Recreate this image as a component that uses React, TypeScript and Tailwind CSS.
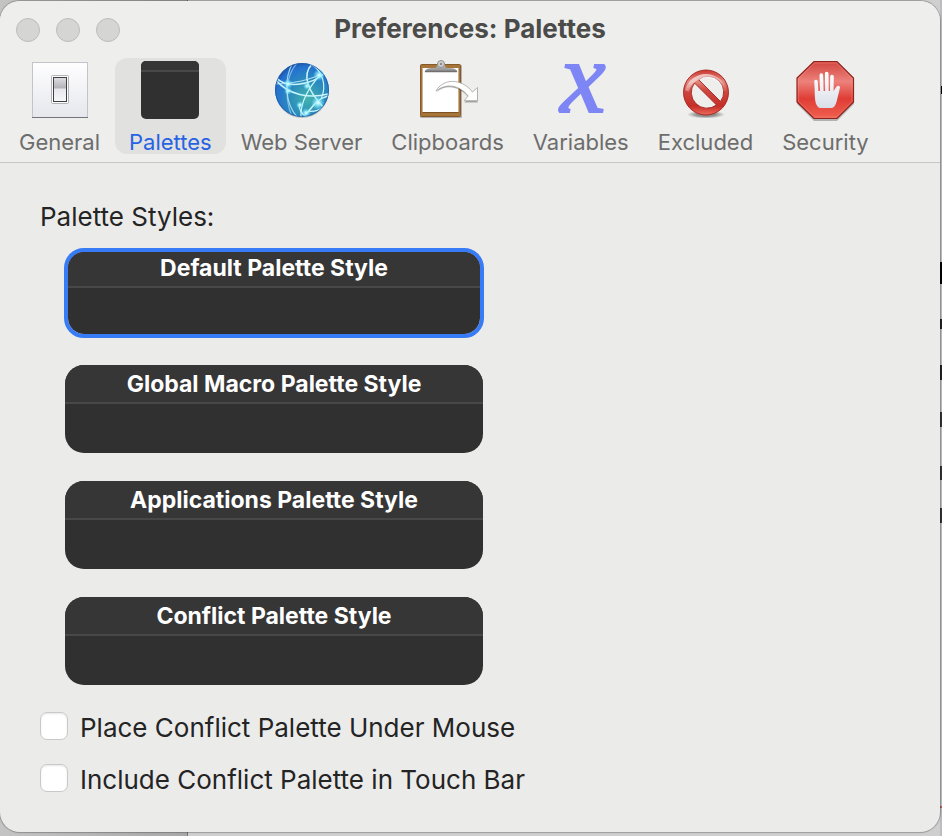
import { useState } from "react";
import type { ReactNode } from "react";

function GeneralIcon() {
  return (
    <svg width="60" height="60" viewBox="0 0 60 60" aria-hidden="true">
      <defs>
        <linearGradient id="plate" x1="0" y1="0" x2="0" y2="1">
          <stop offset="0" stopColor="#fefeff" />
          <stop offset="1" stopColor="#e6e7ec" />
        </linearGradient>
        <linearGradient id="rocker" x1="0" y1="0" x2="0" y2="1">
          <stop offset="0" stopColor="#e2e2e6" />
          <stop offset="0.15" stopColor="#cfcfd4" />
          <stop offset="0.42" stopColor="#b4b4ba" />
          <stop offset="0.5" stopColor="#e8e8ec" />
          <stop offset="1" stopColor="#f8f8fb" />
        </linearGradient>
      </defs>
      <rect x="2.5" y="2.5" width="55" height="55" fill="url(#plate)" stroke="#c3c4ca" />
      <path d="M2 57.5h56" stroke="#74757c" />
      <rect x="21.5" y="15.5" width="17" height="28" rx="1" fill="#fafafa" stroke="#b4b4b4" />
      <rect x="23.5" y="17.5" width="13" height="24" fill="url(#rocker)" stroke="#3f4046" />
    </svg>
  );
}

function PalettesIcon() {
  return (
    <svg width="60" height="60" viewBox="0 0 60 60" aria-hidden="true">
      <rect x="1" y="1" width="58" height="58" rx="5" fill="#303030" />
      <path d="M1 11V6a5 5 0 0 1 5-5h48a5 5 0 0 1 5 5v5z" fill="#353535" />
      <path d="M1 11h58" stroke="#484848" strokeWidth="2" />
    </svg>
  );
}

function GlobeIcon() {
  return (
    <svg width="60" height="60" viewBox="0 0 60 60" aria-hidden="true">
      <defs>
        <radialGradient id="ocean" cx="0.6" cy="0.65" r="0.68">
          <stop offset="0" stopColor="#43b3ae" />
          <stop offset="0.5" stopColor="#2b8bbd" />
          <stop offset="0.85" stopColor="#2472d0" />
          <stop offset="1" stopColor="#1d54a8" />
        </radialGradient>
        <radialGradient id="spark">
          <stop offset="0" stopColor="#ffffff" />
          <stop offset="0.35" stopColor="#9af3ff" stopOpacity="0.8" />
          <stop offset="1" stopColor="#6fe6ff" stopOpacity="0" />
        </radialGradient>
        <clipPath id="globe">
          <circle cx="30" cy="30" r="27" />
        </clipPath>
      </defs>
      <ellipse cx="30" cy="31.5" rx="26.5" ry="26.5" fill="#000" opacity="0.2" />
      <circle cx="30" cy="30" r="27" fill="url(#ocean)" />
      <g clipPath="url(#globe)" fill="none" stroke="#c9f4fb" strokeWidth="1.2">
        <path d="M20 4C12 20 13 43 25 57" strokeOpacity="0.75" />
        <path d="M25 3C13 17 13 37 19 54" strokeOpacity="0.5" />
        <path d="M4 17C12 28 38 27 54 12" strokeWidth="1.5" />
        <path d="M3 24C20 24 38 20 49 14" strokeOpacity="0.8" />
        <path d="M4 20C16 35 38 39 56 34" strokeWidth="1.5" />
        <path d="M40 4C30 15 34 29 52 48" strokeWidth="1.5" />
        <path d="M38 4C51 10 55 26 49 39" />
        <path d="M48 15C40 24 28 39 29 57" />
        <path d="M27 44C27 52 31 55 35 57" />
        <path d="M34 54C40 48 44 39 56 36" strokeWidth="1.6" />
        <path d="M34 52C39 51 45 52 50 48" />
      </g>
      <g fill="url(#spark)">
        <circle cx="16" cy="24" r="5" />
        <circle cx="16" cy="31" r="4" />
        <circle cx="35" cy="26" r="4" />
        <circle cx="47" cy="15" r="6" />
        <circle cx="46" cy="43" r="7" />
        <circle cx="34" cy="53" r="5" />
        <circle cx="28" cy="45" r="4" />
      </g>
      <circle cx="30" cy="30" r="26.5" fill="none" stroke="#1d57a5" strokeOpacity="0.7" />
    </svg>
  );
}

function ClipboardIcon() {
  return (
    <svg width="60" height="60" viewBox="0 0 60 60" aria-hidden="true" className="overflow-visible">
      <defs>
        <linearGradient id="clip" x1="0" y1="0" x2="0" y2="1">
          <stop offset="0" stopColor="#d5d5d5" />
          <stop offset="1" stopColor="#8a8a8a" />
        </linearGradient>
      </defs>
      <rect x="2" y="5" width="42" height="53" rx="1" fill="#000" opacity="0.25" />
      <rect x="2.5" y="4.5" width="40" height="52" rx="1" fill="#a87538" stroke="#86592a" />
      <rect x="4.5" y="9" width="36" height="44" fill="#5d3c18" opacity="0.6" />
      <rect x="4.5" y="8" width="36" height="44" fill="#ffffff" />
      <path d="M7 11.5q1-3 6-3h2q4 0 4.500-4.500a4 4 0 0 1 7 0q.5 4.500 4.500 4.500h2q5 0 6 3z" fill="url(#clip)" stroke="#8f8f8f" strokeWidth="0.6" />
      <circle cx="23" cy="4" r="3.500" fill="#d2d2d2" stroke="#8f8f8f" />
      <circle cx="23" cy="4" r="1.300" fill="#8d8d8d" />
      <path d="M7 11.500h32" stroke="#707070" strokeWidth="1.500" />
      <path d="M18 32.500C25 22 43 19 54 34l5.500-4.500v13H46.500l4-5C41 26 28 24 18 32.500z" fill="#000" opacity="0.3" />
      <path
        d="M18 31C25 18.500 43 17.500 54.500 32l5-4.500v13.200H46.200l4-4.700C41 24.500 28 23 18 31z"
        fill="#ffffff"
        stroke="#9a9a9a"
        strokeWidth="0.7"
        strokeLinejoin="round"
      />
    </svg>
  );
}

function VariablesIcon() {
  return (
    <svg width="64" height="60" viewBox="0 0 64 60" aria-hidden="true" className="overflow-visible">
      <text
        x="34"
        y="52"
        textAnchor="middle"
        strokeWidth="2"
        className="fill-[#7d86f4] stroke-[#7d86f4] font-['Liberation_Serif',serif] text-[102px] italic"
      >
        x
      </text>
    </svg>
  );
}

function ExcludedIcon() {
  return (
    <svg width="60" height="60" viewBox="0 0 60 60" aria-hidden="true">
      <defs>
        <linearGradient id="ring" x1="0" y1="0" x2="0" y2="1">
          <stop offset="0" stopColor="#c9382f" />
          <stop offset="0.25" stopColor="#e4857c" />
          <stop offset="0.45" stopColor="#cf4840" />
          <stop offset="0.8" stopColor="#c42f28" />
          <stop offset="1" stopColor="#ef6a5c" />
        </linearGradient>
        <radialGradient id="excludedShade">
          <stop offset="0.5" stopColor="#000" stopOpacity="0.4" />
          <stop offset="1" stopColor="#000" stopOpacity="0" />
        </radialGradient>
        <linearGradient id="gloss" x1="0" y1="0" x2="0.7" y2="1">
          <stop offset="0" stopColor="#fff" stopOpacity="0.75" />
          <stop offset="1" stopColor="#fff" stopOpacity="0.1" />
        </linearGradient>
      </defs>
      <ellipse cx="31" cy="54.500" rx="19" ry="4" fill="url(#excludedShade)" />
      <path
        fillRule="evenodd"
        d="M31 10a22.500 22.500 0 1 0 0 45a22.500 22.500 0 1 0 0-45zM19.500 23L41.500 45A15.700 15.700 0 0 1 19.500 23zM23.500 19.500A15.700 15.700 0 0 1 45.500 41.500z"
        fill="url(#ring)"
        stroke="#a3211b"
        strokeWidth="0.9"
      />
      <path d="M12 31a19.500 19.500 0 0 1 38 0" fill="none" stroke="url(#gloss)" strokeWidth="4" />
    </svg>
  );
}

function SecurityIcon() {
  return (
    <svg width="60" height="60" viewBox="0 0 60 60" aria-hidden="true" className="overflow-visible">
      <defs>
        <linearGradient id="sign" x1="0" y1="0" x2="0" y2="1">
          <stop offset="0" stopColor="#d2463f" />
          <stop offset="0.35" stopColor="#ec827b" />
          <stop offset="0.65" stopColor="#df3d35" />
          <stop offset="1" stopColor="#f0604f" />
        </linearGradient>
        <linearGradient id="palm" gradientUnits="userSpaceOnUse" x1="0" y1="12" x2="0" y2="48">
          <stop offset="0" stopColor="#ffffff" />
          <stop offset="1" stopColor="#d9dee8" />
        </linearGradient>
      </defs>
      <path d="M19 3h23l17 17v24L42 61H19L2 44V20z" fill="#000" opacity="0.25" />
      <path d="M19 1.500h23L58.500 18v24L42 58.500H19L2 42V18z" fill="url(#sign)" stroke="#8e2420" strokeWidth="1.200" />
      <path d="M19.500 3h22L57 18.500v23L41.500 57h-22L3.500 41.500v-23z" fill="none" stroke="#f6a197" strokeOpacity="0.35" />
      <g stroke="url(#palm)" strokeLinecap="round" fill="none" strokeWidth="3.6">
        <path d="M21 21.500L22 38" />
        <path d="M26.300 15L27 35" />
        <path d="M31.700 13.500L32 35" />
        <path d="M37 16.500L36.700 36" />
      </g>
      <path
        d="M19.800 31h18.800l3-4.500c1.500-1.600 3.900-.6 3.300 1.500L42.500 38c-1 5-2.500 9.500-6 10H25c-4-1-5.500-7-5.200-17z"
        fill="url(#palm)"
      />
    </svg>
  );
}

type Tab = { name: string; icon: ReactNode };

const tabs: Tab[] = [
  { name: "General", icon: <GeneralIcon /> },
  { name: "Palettes", icon: <PalettesIcon /> },
  { name: "Web Server", icon: <GlobeIcon /> },
  { name: "Clipboards", icon: <ClipboardIcon /> },
  { name: "Variables", icon: <VariablesIcon /> },
  { name: "Excluded", icon: <ExcludedIcon /> },
  { name: "Security", icon: <SecurityIcon /> },
];

const styles = [
  "Default Palette Style",
  "Global Macro Palette Style",
  "Applications Palette Style",
  "Conflict Palette Style",
];

const options = ["Place Conflict Palette Under Mouse", "Include Conflict Palette in Touch Bar"];

function TitleBar() {
  return (
    <div className="grid h-14 grid-cols-[1fr_auto_1fr] items-center px-4">
      <div className="flex gap-4">
        {["Close", "Minimize", "Zoom"].map((name) => (
          <button
            key={name}
            type="button"
            aria-label={name}
            className="size-6 rounded-full border border-[#bcbcba] bg-[#d5d5d3]"
          />
        ))}
      </div>
      <h1 className="pb-[2px] text-[26px] leading-8 font-bold text-[#4b4b4a]">Preferences: Palettes</h1>
    </div>
  );
}

export default function App() {
  const [tab, setTab] = useState("Palettes");
  const [style, setStyle] = useState(styles[0]);

  return (
    <div className="relative flex min-h-screen flex-col bg-[linear-gradient(90deg,#c4c4c4_0,#a8a8a8_187px,#777_187px,#777_188px,#cfcfcf_188px)] pt-px pr-[2px] pb-1 font-[Inter,'Liberation_Sans',sans-serif]">
      <div aria-hidden="true" className="absolute inset-y-0 right-0 w-[2px] bg-[#b9bcc0]">
        <i className="absolute top-[86px] right-0 h-2 w-px bg-black" />
        <i className="absolute top-[262px] right-0 h-[22px] w-[2px] bg-black" />
        <i className="absolute top-[319px] right-0 h-[10px] w-[2px] bg-[#222]" />
        <i className="absolute top-[365px] right-0 h-[15px] w-[2px] bg-[#222]" />
        <i className="absolute top-[412px] right-0 h-[15px] w-[2px] bg-[#333]" />
        <i className="absolute top-[466px] right-0 h-[14px] w-[2px] bg-[#333]" />
        <i className="absolute top-[508px] right-0 h-[15px] w-[2px] bg-[#333]" />
        <i className="absolute top-[806px] right-0 h-[2px] w-[2px] bg-[#b5604f]" />
      </div>
      <main className="relative flex flex-1 flex-col overflow-hidden rounded-[20px] bg-[#ebebea] shadow-[0_0_1px_1px_rgba(0,0,0,0.25)]">
        <header className="border-b border-[#c6c6c5] bg-[#eeeeec] pt-px pb-2">
          <TitleBar />
          <nav aria-label="Preference panes" className="flex gap-px pl-[5px]">
            {tabs.map(({ name, icon }) => (
              <button
                key={name}
                type="button"
                aria-pressed={tab === name}
                onClick={() => setTab(name)}
                className={`flex h-24 flex-col items-center justify-between rounded-xl px-[14px] pt-[2px] text-[22px] leading-6 ${
                  tab === name ? "bg-[#e1e1df] text-[#2663e4]" : "text-[#6d6d6c]"
                }`}
              >
                <span className="flex h-[60px] items-center">{icon}</span>
                {name}
              </button>
            ))}
          </nav>
        </header>

        <section className="px-10 pt-[38px] text-[26px] text-[#242424]">
          <h2 id="styles" className="leading-8">
            Palette Styles:
          </h2>
          <div role="group" aria-labelledby="styles" className="mt-[15px] ml-6 flex max-w-[420px] flex-col gap-[26px]">
            {styles.map((name) => (
              <button
                key={name}
                type="button"
                aria-pressed={style === name}
                onClick={() => setStyle(name)}
                className={`flex h-[90px] flex-col overflow-hidden rounded-[20px] bg-[#303030] bg-clip-padding ${
                  style === name ? "border-4 border-[#377cf6]" : "border border-transparent"
                }`}
              >
                <span
                  className={`flex w-full justify-center border-b-2 border-[#484848] bg-[#363636] text-[23px] font-bold text-white ${
                    style === name ? "h-9 leading-8" : "h-[39px] leading-[38px]"
                  }`}
                >
                  {name}
                </span>
              </button>
            ))}
          </div>

          <div className="mt-[26px] flex flex-col gap-5">
            {options.map((name) => (
              <label key={name} className="flex items-start gap-3 leading-8">
                <input
                  type="checkbox"
                  className="size-7 shrink-0 appearance-none rounded-[7px] border border-[#c9c9c8] bg-white shadow-[inset_0_1px_2px_rgba(0,0,0,0.1)] checked:bg-[#377cf6]"
                />
                {name}
              </label>
            ))}
          </div>
        </section>
      </main>
    </div>
  );
}
